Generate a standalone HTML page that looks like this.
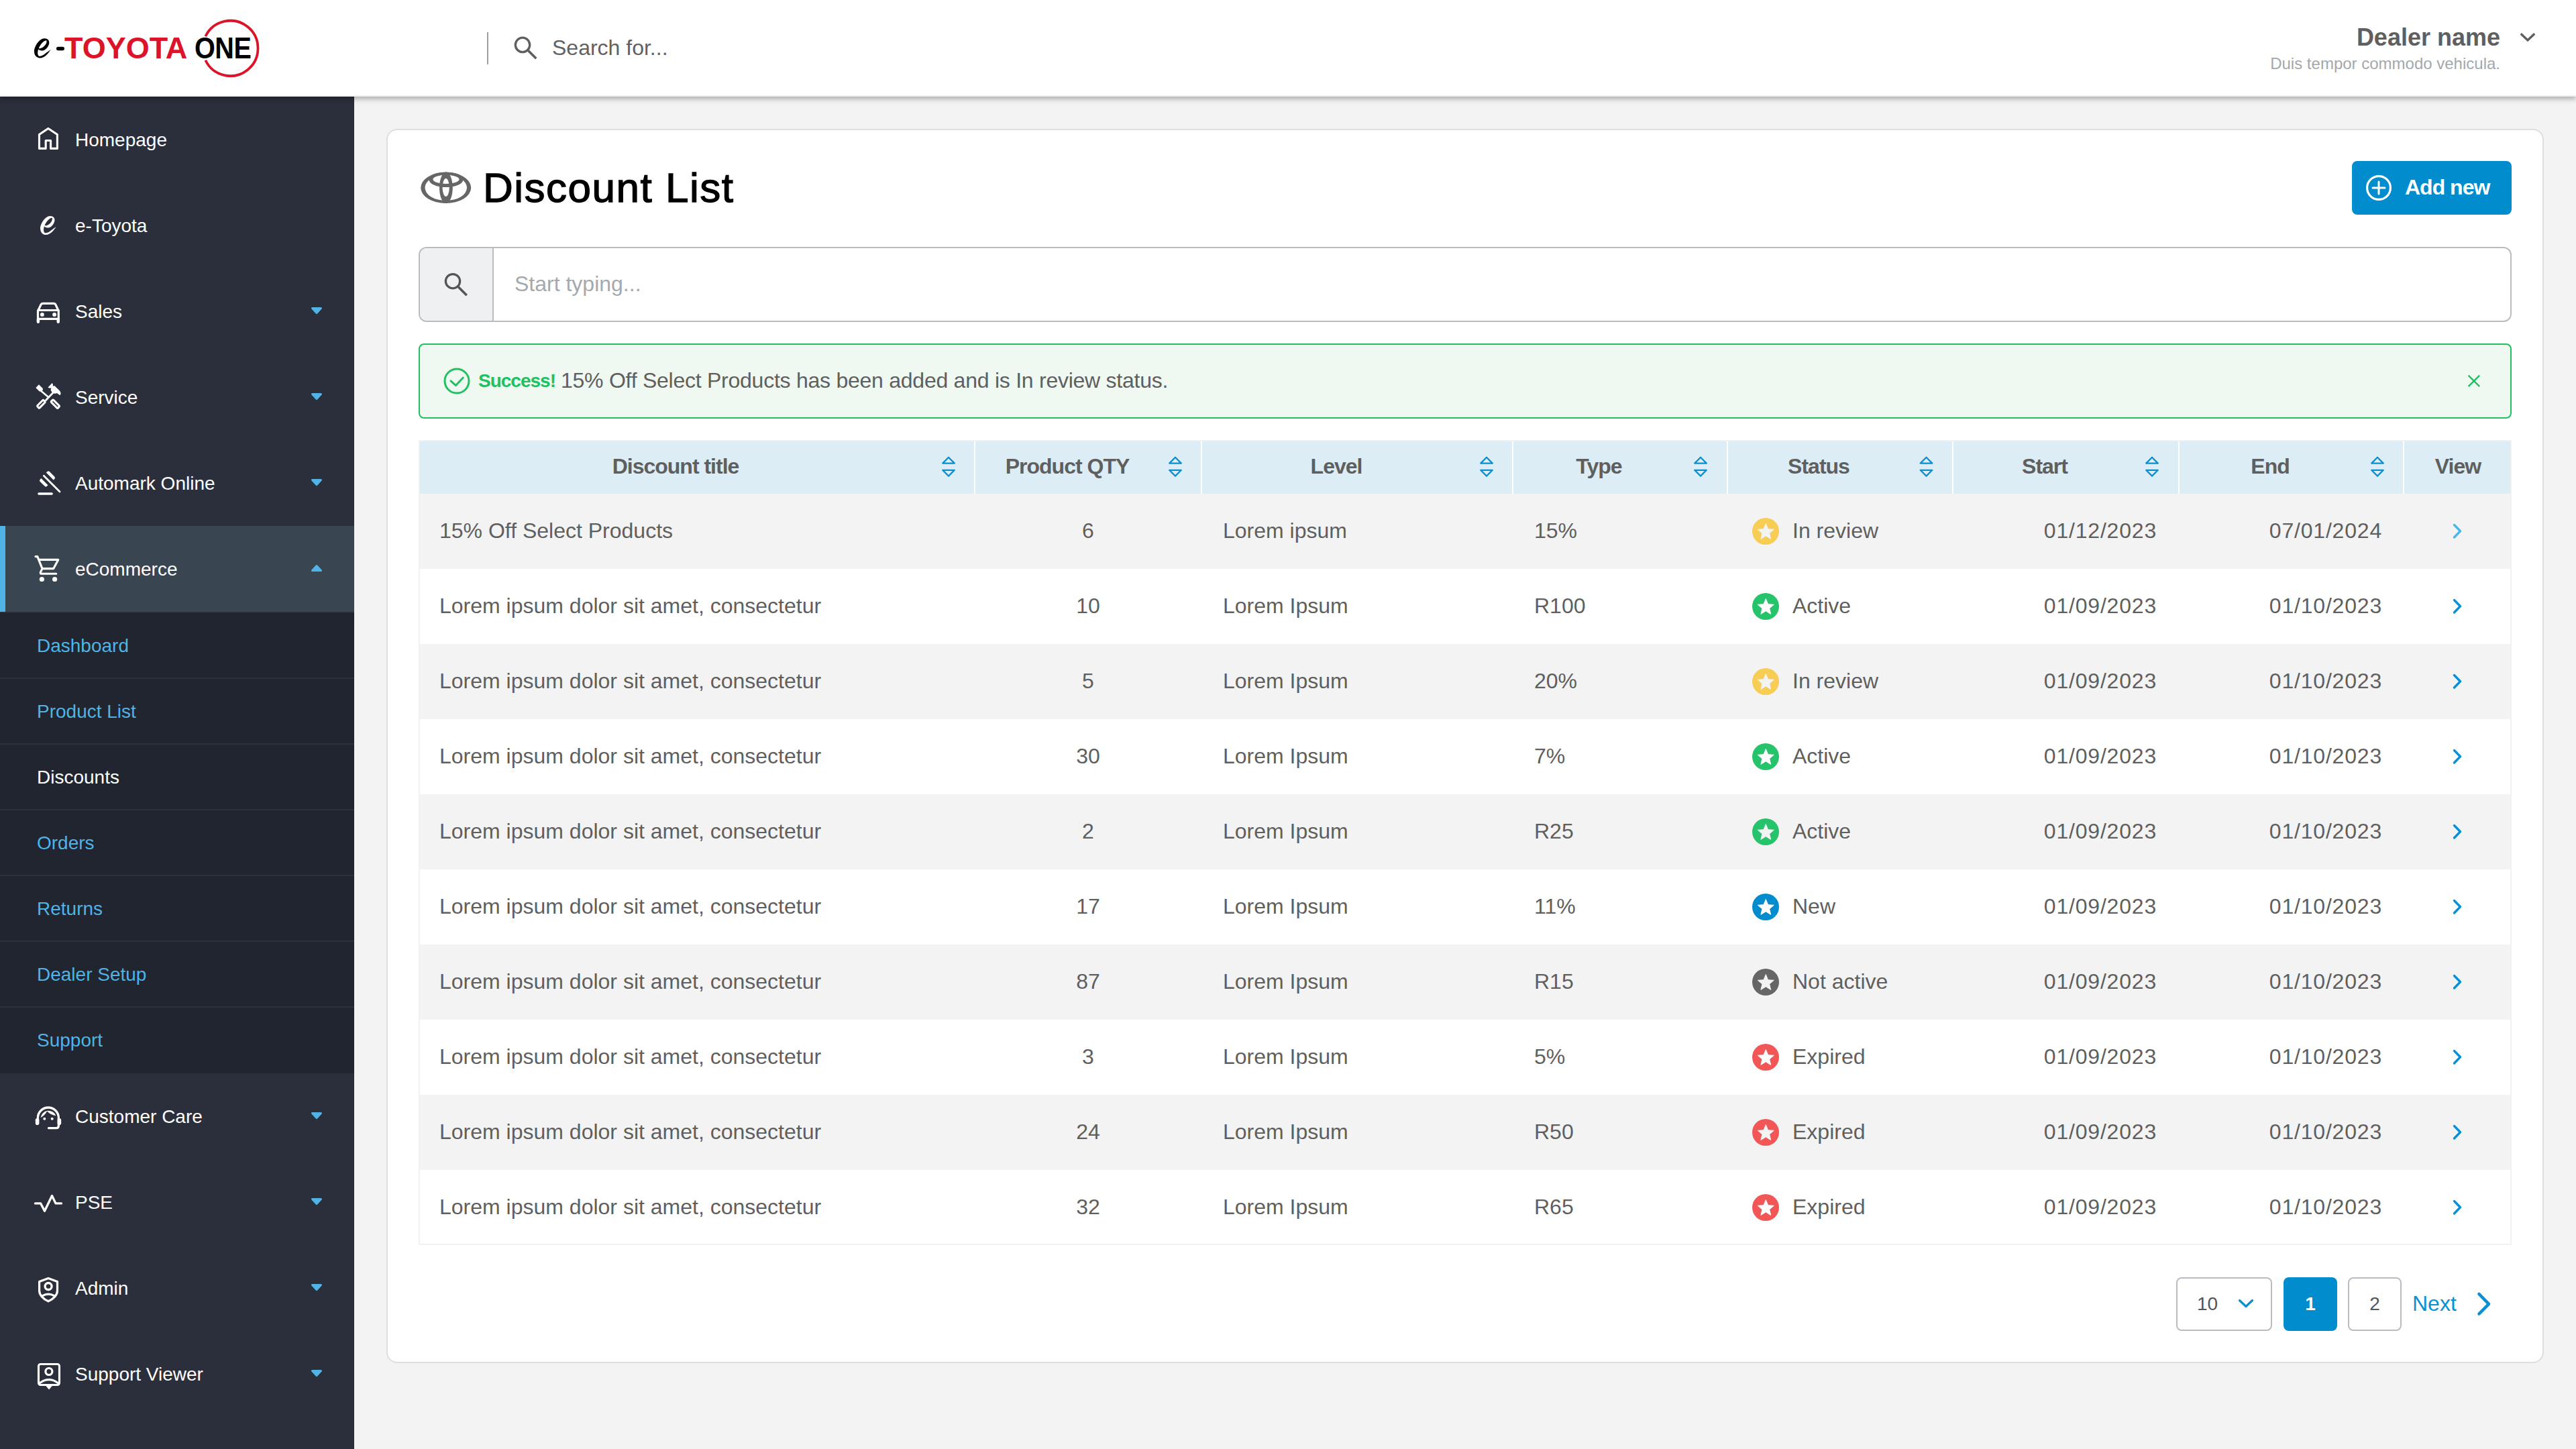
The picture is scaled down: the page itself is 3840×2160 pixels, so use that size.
<!DOCTYPE html>
<html><head><meta charset="utf-8">
<style>
*{box-sizing:border-box;margin:0;padding:0}
html,body{width:3840px;height:2160px;overflow:hidden;background:#f3f3f3;font-family:"Liberation Sans",sans-serif;color:#5f5f5f}
.abs{position:absolute}
#hdr{position:absolute;left:0;top:0;width:3840px;height:144px;background:#fff;z-index:5;border-bottom:2px solid #efefef;box-shadow:0 4px 7px rgba(0,0,0,.27)}
#side{position:absolute;left:0;top:144px;width:528px;height:2016px;background:#2b2f3b;z-index:3}
.it{position:absolute;left:0;width:528px;height:128px;display:flex;align-items:center;color:#fff;font-size:28px}
.it .tx{position:absolute;left:112px;top:49px;line-height:32px}
.it svg.ic{position:absolute;left:40px;top:34px;width:60px;height:60px}
.it .car{position:absolute;left:464px;top:56px;width:16px;height:16px}
.sub{position:absolute;left:0;width:528px;height:98px;display:flex;align-items:center;font-size:28px;color:#4fb3e6;border-bottom:2px solid #2d313b}
.sub .tx{position:absolute;left:55px;top:33px;line-height:32px}
#card{position:absolute;left:576px;top:192px;width:3216px;height:1840px;background:#fff;border:2px solid #dcdfe2;border-radius:16px}
.th{position:absolute;top:0;height:80px;display:flex;align-items:center;justify-content:center;font-weight:bold;font-size:32px;color:#5f5f5f}
.row{position:absolute;left:0;width:3116px;height:112px;font-size:32px;color:#5f5f5f}
.row.g{background:#f3f3f3}
.c{position:absolute;top:0;height:112px;display:flex;align-items:center;white-space:nowrap}
</style></head><body>
<!-- HEADER -->
<div id="hdr">
<svg class="abs" style="left:0;top:0" width="420" height="144" viewBox="0 0 420 144">
 <path d="M306.3 54.3 A41.1 41.1 0 1 1 306.3 89.7" fill="none" stroke="#dc1429" stroke-width="3.8"/>
 <path fill="#000" fill-rule="evenodd" d="M75.6 74 C72.3 79.3 66.5 86.4 59.9 86.6 C53.7 86.4 50.8 81.4 51 76 C51.2 69 58.6 57.4 66.1 57.2 C71.5 57.2 73.5 60.3 73.3 64 C72.9 69 68.2 75.2 63.2 75.6 C59.9 75.8 57.8 74.4 57.2 73.3 C55.9 77.3 55.7 81.4 57.8 83.4 C59.9 84.2 63.5 83.2 67 80.2 C70.5 77.5 73.5 75.5 75.6 74 Z M57.8 71.9 C59.9 66.9 64.8 60.7 68.6 60.3 C70.2 60.3 69.8 63.2 68.2 66.1 C65.7 69.8 61.5 73.1 57.8 71.9 Z"/>
 <rect x="84" y="69.8" width="12" height="5.4" rx="2.7" fill="#000"/>
</svg>
<div class="abs" id="toy" style="left:96px;top:49px;font-size:45px;font-weight:bold;color:#dc1429;line-height:45px;letter-spacing:0px">TOYOTA</div>
<div class="abs" id="one" style="left:290px;top:49px;font-size:45px;font-weight:bold;color:#000;line-height:45px;letter-spacing:-0.5px;transform:scaleX(.88);transform-origin:0 0">ONE</div>
<div class="abs" style="left:726px;top:48px;width:2px;height:48px;background:#a0a0a0"></div>
<svg class="abs" style="left:760px;top:48px" width="48" height="48" viewBox="760 48 48 48">
 <circle cx="779" cy="66.9" r="10.7" fill="none" stroke="#5f5f5f" stroke-width="3.3"/>
 <path d="M787 75 L798 86" stroke="#5f5f5f" stroke-width="3.6" stroke-linecap="square"/>
</svg>
<div class="abs" style="left:823px;top:55px;font-size:32px;line-height:32px;color:#616161">Search for...</div>
<div class="abs" style="right:113px;top:38px;font-size:36px;line-height:36px;font-weight:bold;color:#5f5f5f;text-align:right">Dealer name</div>
<svg class="abs" style="left:3750px;top:40px" width="36" height="30" viewBox="3750 40 36 30">
 <path d="M3759 51.5 L3768 60 L3777 51.5" fill="none" stroke="#5f5f5f" stroke-width="3.4" stroke-linecap="square"/>
</svg>
<div class="abs" style="right:113px;top:83px;font-size:24px;line-height:24px;color:#a3a8ac;text-align:right">Duis tempor commodo vehicula.</div>
</div>
<!-- SIDEBAR -->
<div id="side">
<div class="it" style="top:0px"><svg class="ic" style="top:36px" viewBox="0 0 60 60"><path d="M18.5 41.4 V20.5 L31.9 11.5 L45.4 20.5 V41.4 H35.6 V29.5 H28.2 V41.4 Z" stroke="#fff" fill="none" stroke-linecap="round" stroke-linejoin="round" stroke-width="3.1"/></svg><span class="tx">Homepage</span></div>
<div class="it" style="top:128px"><svg class="ic" style="top:34px" viewBox="0 0 60 60"><g transform="translate(19.9 15.7) scale(.96) translate(-50.8 -57)"><path fill="#fff" fill-rule="evenodd" d="M75.6 74 C72.3 79.3 66.5 86.4 59.9 86.6 C53.7 86.4 50.8 81.4 51 76 C51.2 69 58.6 57.4 66.1 57.2 C71.5 57.2 73.5 60.3 73.3 64 C72.9 69 68.2 75.2 63.2 75.6 C59.9 75.8 57.8 74.4 57.2 73.3 C55.9 77.3 55.7 81.4 57.8 83.4 C59.9 84.2 63.5 83.2 67 80.2 C70.5 77.5 73.5 75.5 75.6 74 Z M57.8 71.9 C59.9 66.9 64.8 60.7 68.6 60.3 C70.2 60.3 69.8 63.2 68.2 66.1 C65.7 69.8 61.5 73.1 57.8 71.9 Z"/></g></svg><span class="tx">e-Toyota</span></div>
<div class="it" style="top:256px"><svg class="ic" style="top:34px" viewBox="0 0 60 60"><path d="M16.5 44 V29.5 L21.2 19.8 Q22 18.4 24 18.4 H40 Q42 18.4 42.8 19.8 L47.3 29.5 V44 M16.5 28.5 H47.3 M16.5 41.3 H47.3" stroke="#fff" fill="none" stroke-linecap="round" stroke-linejoin="round" stroke-width="3.2"/><path d="M16.9 42 V45.8 M46.75 42 V45.8" stroke="#fff" fill="none" stroke-linecap="round" stroke-linejoin="round" stroke-width="4.4"/><circle cx="22.9" cy="34.9" r="2.9" fill="#fff"/><circle cx="41.1" cy="34.9" r="2.9" fill="#fff"/></svg><span class="tx">Sales</span><svg class="car" style="left:460px;top:54px;width:24px;height:18px" viewBox="0 0 24 18"><path d="M5.6 5.5 H18.4 L12 12.4 Z" fill="#4fb3e6" stroke="#4fb3e6" stroke-width="3.2" stroke-linejoin="round"/></svg></div>
<div class="it" style="top:384px"><svg class="ic" style="top:34px" viewBox="0 0 60 60"><path d="M13.3 15.9 L18 11.2 L23.8 17 V19.5 L21.3 21.5 H18.8 Z" fill="#fff"/><path d="M21.5 21 L31 29" stroke="#fff" fill="none" stroke-linecap="round" stroke-linejoin="round" stroke-width="2.8"/><rect x="-7" y="-2.3" width="14" height="4.6" rx="1" transform="translate(42.4 40.2) rotate(45)" stroke="#fff" fill="none" stroke-linecap="round" stroke-linejoin="round" stroke-width="3"/><rect x="-6.5" y="-2.3" width="13" height="4.6" rx="1" transform="translate(21.4 40.3) rotate(-45)" stroke="#fff" fill="none" stroke-linecap="round" stroke-linejoin="round" stroke-width="3"/><path d="M28.5 34.5 L38.5 24" stroke="#fff" fill="none" stroke-linecap="round" stroke-linejoin="round" stroke-width="2.8"/><path d="M31.5 15.5 L37.7 8.9 L38.9 10.8 V13.7 L41.2 13 L49.5 21.1 L50.7 24.4 L49.5 27.3 L44.7 24 L43 24.8 L40.2 24.4 L37.3 22.4 L35.6 19.5 L36.4 16.6 L33.1 16.6 Z" fill="#fff"/></svg><span class="tx">Service</span><svg class="car" style="left:460px;top:54px;width:24px;height:18px" viewBox="0 0 24 18"><path d="M5.6 5.5 H18.4 L12 12.4 Z" fill="#4fb3e6" stroke="#4fb3e6" stroke-width="3.2" stroke-linejoin="round"/></svg></div>
<div class="it" style="top:512px"><svg class="ic" style="top:34px" viewBox="0 0 60 60"><g transform="translate(24.9 18.8) rotate(45)"><path d="M-0.2 -5.8 H15.2 V-8 Q15.2 -10.4 12.8 -10.4 H2.2 Q-0.2 -10.4 -0.2 -8 Z M0.5 5.5 H14.9 V7.8 Q14.9 10.1 12.6 10.1 H2.8 Q0.5 10.1 0.5 7.8 Z" fill="#fff"/><path d="M0.6 0 H34.2" stroke="#fff" fill="none" stroke-linecap="round" stroke-linejoin="round" stroke-width="2.7"/></g><path d="M17.9 46 H37.2" stroke="#fff" fill="none" stroke-linecap="round" stroke-linejoin="round" stroke-width="3.4"/></svg><span class="tx">Automark Online</span><svg class="car" style="left:460px;top:54px;width:24px;height:18px" viewBox="0 0 24 18"><path d="M5.6 5.5 H18.4 L12 12.4 Z" fill="#4fb3e6" stroke="#4fb3e6" stroke-width="3.2" stroke-linejoin="round"/></svg></div>
<div class="it" style="top:640px;background:#3a4552"><div class="abs" style="left:0;top:0;width:8px;height:128px;background:#4fb3e6"></div><svg class="ic" style="top:34px" viewBox="0 0 60 60"><path d="M13 11.6 H15.8 L23 29.6 H39.8 L46.8 16.4 H18.4 M23 29.6 L20.4 35 Q19.6 37.3 22.2 37.3 H43.8" stroke="#fff" fill="none" stroke-linecap="round" stroke-linejoin="round" stroke-width="3.1"/><circle cx="22.4" cy="45.5" r="3.6" fill="#fff"/><circle cx="41.6" cy="45.5" r="3.6" fill="#fff"/></svg><span class="tx">eCommerce</span><svg class="car" style="left:460px;top:54px;width:24px;height:18px" viewBox="0 0 24 18"><path d="M5.6 12.5 H18.4 L12 5.6 Z" fill="#4fb3e6" stroke="#4fb3e6" stroke-width="3.2" stroke-linejoin="round"/></svg></div>
<div class="abs" style="left:0;top:768px;width:528px;height:688px;background:#21252f;border-top:2px solid #2b2f3a">
<div class="sub" style="top:0px;color:#4fb3e6;"><span class="tx">Dashboard</span></div>
<div class="sub" style="top:98px;color:#4fb3e6;"><span class="tx">Product List</span></div>
<div class="sub" style="top:196px;color:#fff;"><span class="tx">Discounts</span></div>
<div class="sub" style="top:294px;color:#4fb3e6;"><span class="tx">Orders</span></div>
<div class="sub" style="top:392px;color:#4fb3e6;"><span class="tx">Returns</span></div>
<div class="sub" style="top:490px;color:#4fb3e6;"><span class="tx">Dealer Setup</span></div>
<div class="sub" style="top:588px;color:#4fb3e6;border-bottom:none;"><span class="tx">Support</span></div>
</div>
<div class="it" style="top:1456px"><svg class="ic" style="top:34px" viewBox="0 0 60 60"><path d="M16.4 40 V32.5 A15.5 15.5 0 0 1 47.4 32.5 V44 Q47.4 47.6 44 47.6 H32.5" stroke="#fff" fill="none" stroke-linecap="round" stroke-linejoin="round" stroke-width="3.3"/><rect x="12.8" y="33" width="5.6" height="10" rx="2.8" fill="#fff"/><rect x="45.6" y="33" width="5.6" height="10" rx="2.8" fill="#fff"/><path d="M20.6 32 A11.8 11.8 0 0 1 43.3 29.2 C38 28.5 33 25.5 30.2 22.5 C27.5 27 24 30.5 20.6 32 Z" fill="#fff"/><circle cx="26.3" cy="33.7" r="2" fill="#fff"/><circle cx="37.7" cy="33.7" r="2" fill="#fff"/></svg><span class="tx">Customer Care</span><svg class="car" style="left:460px;top:54px;width:24px;height:18px" viewBox="0 0 24 18"><path d="M5.6 5.5 H18.4 L12 12.4 Z" fill="#4fb3e6" stroke="#4fb3e6" stroke-width="3.2" stroke-linejoin="round"/></svg></div>
<div class="it" style="top:1584px"><svg class="ic" style="top:34px" viewBox="0 0 60 60"><path d="M12.5 31.9 H20.7 L26.5 43.2 L37.5 20.5 L43 31.9 H51.5" stroke="#fff" fill="none" stroke-linecap="round" stroke-linejoin="round" stroke-width="3.3"/></svg><span class="tx">PSE</span><svg class="car" style="left:460px;top:54px;width:24px;height:18px" viewBox="0 0 24 18"><path d="M5.6 5.5 H18.4 L12 12.4 Z" fill="#4fb3e6" stroke="#4fb3e6" stroke-width="3.2" stroke-linejoin="round"/></svg></div>
<div class="it" style="top:1712px"><svg class="ic" style="top:34px" viewBox="0 0 60 60"><path d="M32 15.5 L18.6 20.6 V34 C18.6 40.5 24.5 46.5 32 49.8 C39.5 46.5 45.5 40.5 45.5 34 V20.6 Z" stroke="#fff" fill="none" stroke-linecap="round" stroke-linejoin="round" stroke-width="3.2"/><circle cx="32.1" cy="27.5" r="5" stroke="#fff" fill="none" stroke-linecap="round" stroke-linejoin="round" stroke-width="3.3"/><path d="M23.2 41.6 Q32 36.5 41 41.6" stroke="#fff" fill="none" stroke-linecap="round" stroke-linejoin="round" stroke-width="3.3"/></svg><span class="tx">Admin</span><svg class="car" style="left:460px;top:54px;width:24px;height:18px" viewBox="0 0 24 18"><path d="M5.6 5.5 H18.4 L12 12.4 Z" fill="#4fb3e6" stroke="#4fb3e6" stroke-width="3.2" stroke-linejoin="round"/></svg></div>
<div class="it" style="top:1840px"><svg class="ic" style="top:34px" viewBox="0 0 60 60"><rect x="17.5" y="15.5" width="31" height="31" rx="3" stroke="#fff" fill="none" stroke-linecap="round" stroke-linejoin="round" stroke-width="3.1"/><path d="M27.5 47 L33.1 53.4 L38.5 47 Z" fill="#fff"/><circle cx="32.9" cy="26.5" r="5" stroke="#fff" fill="none" stroke-linecap="round" stroke-linejoin="round" stroke-width="3.2"/><path d="M19.5 43.5 Q32.9 33.9 46.3 43.5" stroke="#fff" fill="none" stroke-linecap="round" stroke-linejoin="round" stroke-width="3.1"/></svg><span class="tx">Support Viewer</span><svg class="car" style="left:460px;top:54px;width:24px;height:18px" viewBox="0 0 24 18"><path d="M5.6 5.5 H18.4 L12 12.4 Z" fill="#4fb3e6" stroke="#4fb3e6" stroke-width="3.2" stroke-linejoin="round"/></svg></div>
</div>
<!-- CARD -->
<div id="card"></div>
<svg class="abs" style="left:620px;top:245px" width="90" height="70" viewBox="0 0 90 70"><g fill="#666" fill-rule="evenodd"><path d="M7.200000000000003 34.8 A37.5 23.2 0 1 0 82.2 34.8 A37.5 23.2 0 1 0 7.200000000000003 34.8 Z M13.5 34.8 A31.25 19.2 0 1 0 76.0 34.8 A31.25 19.2 0 1 0 13.5 34.8 Z"/><path d="M19.550000000000004 22.9 A25.4 11.2 0 1 0 70.35 22.9 A25.4 11.2 0 1 0 19.550000000000004 22.9 Z M25.35 22.35 A19.6 6.65 0 1 0 64.55000000000001 22.35 A19.6 6.65 0 1 0 25.35 22.35 Z"/><path d="M35.0 34.8 A9.9 23.2 0 1 0 54.8 34.8 A9.9 23.2 0 1 0 35.0 34.8 Z M39.6 34.4 A5.1 13.4 0 1 0 49.800000000000004 34.4 A5.1 13.4 0 1 0 39.6 34.4 Z"/></g></svg>
<div class="abs" style="left:720px;top:247.5px;font-size:62px;line-height:64px;color:#000;-webkit-text-stroke:1.3px #000;letter-spacing:1.5px">Discount List</div>
<div class="abs" style="left:3506px;top:240px;width:238px;height:80px;background:#008ccd;border-radius:8px"></div>
<svg class="abs" style="left:3520px;top:254px" width="52" height="52" viewBox="3520 254 52 52"><circle cx="3546" cy="280" r="17.4" fill="none" stroke="#fff" stroke-width="3.2"/><path d="M3537 280 H3555 M3546 271 V289" stroke="#fff" stroke-width="3" stroke-linecap="round"/></svg>
<div class="abs" style="left:3585px;top:263px;font-size:32px;line-height:32px;font-weight:bold;color:#fff;letter-spacing:-1px">Add new</div>
<div class="abs" style="left:624px;top:368px;width:3120px;height:112px;border:2px solid #b9bdc1;border-radius:12px;background:#fff;overflow:hidden"><div class="abs" style="left:0;top:0;width:110px;height:108px;background:#eff0f2;border-right:2px solid #b9bdc1"></div></div>
<svg class="abs" style="left:655px;top:400px" width="48" height="48" viewBox="655 400 48 48"><circle cx="675" cy="419.2" r="10.6" fill="none" stroke="#555" stroke-width="3.3"/><path d="M683 427.5 L694.5 439" stroke="#555" stroke-width="3.5" stroke-linecap="square"/></svg>
<div class="abs" style="left:767px;top:407px;font-size:32px;line-height:32px;color:#a4a9ad">Start typing...</div>
<div class="abs" style="left:624px;top:512px;width:3120px;height:112px;border:2px solid #21c063;border-radius:8px;background:#eff8f1"></div>
<svg class="abs" style="left:656px;top:543px" width="50" height="50" viewBox="656 543 50 50"><circle cx="681" cy="568" r="18" fill="none" stroke="#21c063" stroke-width="3"/><path d="M672 567.8 L679.5 574.6 L690.3 563" fill="none" stroke="#21c063" stroke-width="3" stroke-linecap="round" stroke-linejoin="round"/></svg>
<div class="abs" style="left:713px;top:554px;font-size:28px;line-height:28px;font-weight:bold;color:#21c063;letter-spacing:-1px">Success!</div>
<div class="abs" style="left:836px;top:551px;font-size:32px;line-height:32px;color:#5f5f5f;letter-spacing:-.25px;white-space:nowrap">15% Off Select Products has been added and is In review status.</div>
<svg class="abs" style="left:3670px;top:550px" width="36" height="36" viewBox="3670 550 36 36"><path d="M3679.6 559.6 L3696.2 576.2 M3696.2 559.6 L3679.6 576.2" stroke="#21c063" stroke-width="2.4" stroke-linecap="butt"/></svg>
<div class="abs" style="left:624px;top:656px;width:3120px;height:1200px;border:2px solid #f1f1f1;background:#fff"></div>
<div class="abs" style="left:626px;top:658px;width:3116px;height:78px;background:#dcedf6"></div>
<div class="abs" style="left:1452px;top:658px;width:2px;height:78px;background:#fff"></div>
<div class="abs" style="left:1790px;top:658px;width:2px;height:78px;background:#fff"></div>
<div class="abs" style="left:2254px;top:658px;width:2px;height:78px;background:#fff"></div>
<div class="abs" style="left:2574px;top:658px;width:2px;height:78px;background:#fff"></div>
<div class="abs" style="left:2910px;top:658px;width:2px;height:78px;background:#fff"></div>
<div class="abs" style="left:3247px;top:658px;width:2px;height:78px;background:#fff"></div>
<div class="abs" style="left:3582px;top:658px;width:2px;height:78px;background:#fff"></div>
<div class="abs" style="left:707px;top:679px;width:600px;text-align:center;font-size:32px;line-height:32px;font-weight:bold;color:#5f5f5f;letter-spacing:-1px">Discount title</div>
<div class="abs" style="left:1291px;top:679px;width:600px;text-align:center;font-size:32px;line-height:32px;font-weight:bold;color:#5f5f5f;letter-spacing:-1px">Product QTY</div>
<div class="abs" style="left:1692px;top:679px;width:600px;text-align:center;font-size:32px;line-height:32px;font-weight:bold;color:#5f5f5f;letter-spacing:-1px">Level</div>
<div class="abs" style="left:2083.5px;top:679px;width:600px;text-align:center;font-size:32px;line-height:32px;font-weight:bold;color:#5f5f5f;letter-spacing:-1px">Type</div>
<div class="abs" style="left:2411px;top:679px;width:600px;text-align:center;font-size:32px;line-height:32px;font-weight:bold;color:#5f5f5f;letter-spacing:-1px">Status</div>
<div class="abs" style="left:2748px;top:679px;width:600px;text-align:center;font-size:32px;line-height:32px;font-weight:bold;color:#5f5f5f;letter-spacing:-1px">Start</div>
<div class="abs" style="left:3084px;top:679px;width:600px;text-align:center;font-size:32px;line-height:32px;font-weight:bold;color:#5f5f5f;letter-spacing:-1px">End</div>
<div class="abs" style="left:3364px;top:679px;width:600px;text-align:center;font-size:32px;line-height:32px;font-weight:bold;color:#5f5f5f;letter-spacing:-1px">View</div>
<svg class="abs" style="left:0;top:0" width="3840" height="760"><g fill="none" stroke="#0a8fd0" stroke-width="2.3" stroke-linejoin="round"><path d="M1405.2 690.6 L1414 681.8 L1422.8 690.6 Z M1405.2 700.8 L1414 709.6 L1422.8 700.8 Z"/><path d="M1743.2 690.6 L1752 681.8 L1760.8 690.6 Z M1743.2 700.8 L1752 709.6 L1760.8 700.8 Z"/><path d="M2207.2 690.6 L2216 681.8 L2224.8 690.6 Z M2207.2 700.8 L2216 709.6 L2224.8 700.8 Z"/><path d="M2526.2 690.6 L2535 681.8 L2543.8 690.6 Z M2526.2 700.8 L2535 709.6 L2543.8 700.8 Z"/><path d="M2862.7 690.6 L2871.5 681.8 L2880.3 690.6 Z M2862.7 700.8 L2871.5 709.6 L2880.3 700.8 Z"/><path d="M3199.2 690.6 L3208 681.8 L3216.8 690.6 Z M3199.2 700.8 L3208 709.6 L3216.8 700.8 Z"/><path d="M3535.2 690.6 L3544 681.8 L3552.8 690.6 Z M3535.2 700.8 L3544 709.6 L3552.8 700.8 Z"/></g></svg>
<div class="abs" style="left:626px;top:736px;width:3116px;height:112px;background:#f3f3f3"><div class="abs" style="left:29px;top:39px;font-size:32px;line-height:32px;color:#5f5f5f;white-space:nowrap;">15% Off Select Products</div><div class="abs" style="left:896px;top:39px;width:200px;text-align:center;font-size:32px;line-height:32px;color:#5f5f5f">6</div><div class="abs" style="left:1197px;top:39px;font-size:32px;line-height:32px;color:#5f5f5f;white-space:nowrap;">Lorem ipsum</div><div class="abs" style="left:1661px;top:39px;font-size:32px;line-height:32px;color:#5f5f5f;white-space:nowrap;">15%</div><svg class="abs" style="left:1986px;top:36px" width="40" height="40" viewBox="0 0 40 40"><circle cx="20" cy="20" r="20" fill="#f7cd55"/><polygon points="20.30,8.60 23.59,16.67 32.28,17.31 25.63,22.93 27.71,31.39 20.30,26.80 12.89,31.39 14.97,22.93 8.32,17.31 17.01,16.67" fill="#f3f3f3" stroke="#f3f3f3" stroke-width="1" stroke-linejoin="round"/></svg><div class="abs" style="left:2046px;top:39px;font-size:32px;line-height:32px;color:#5f5f5f;white-space:nowrap;">In review</div><div class="abs" style="left:2189px;top:39px;width:400px;text-align:right;font-size:32px;line-height:32px;color:#5f5f5f;letter-spacing:.8px">01/12/2023</div><div class="abs" style="left:2525px;top:39px;width:400px;text-align:right;font-size:32px;line-height:32px;color:#5f5f5f;letter-spacing:.8px">07/01/2024</div><svg class="abs" style="left:3024px;top:40px" width="26" height="32" viewBox="0 0 26 32"><path d="M8.5 6.5 L17.5 15.8 L8.5 25" fill="none" stroke="#4db6e8" stroke-width="3.4" stroke-linecap="round" stroke-linejoin="round"/></svg></div>
<div class="abs" style="left:626px;top:848px;width:3116px;height:112px;background:#fff"><div class="abs" style="left:29px;top:39px;font-size:32px;line-height:32px;color:#5f5f5f;white-space:nowrap;">Lorem ipsum dolor sit amet, consectetur</div><div class="abs" style="left:896px;top:39px;width:200px;text-align:center;font-size:32px;line-height:32px;color:#5f5f5f">10</div><div class="abs" style="left:1197px;top:39px;font-size:32px;line-height:32px;color:#5f5f5f;white-space:nowrap;">Lorem Ipsum</div><div class="abs" style="left:1661px;top:39px;font-size:32px;line-height:32px;color:#5f5f5f;white-space:nowrap;">R100</div><svg class="abs" style="left:1986px;top:36px" width="40" height="40" viewBox="0 0 40 40"><circle cx="20" cy="20" r="20" fill="#27c36b"/><polygon points="20.30,8.60 23.59,16.67 32.28,17.31 25.63,22.93 27.71,31.39 20.30,26.80 12.89,31.39 14.97,22.93 8.32,17.31 17.01,16.67" fill="#fff" stroke="#fff" stroke-width="1" stroke-linejoin="round"/></svg><div class="abs" style="left:2046px;top:39px;font-size:32px;line-height:32px;color:#5f5f5f;white-space:nowrap;">Active</div><div class="abs" style="left:2189px;top:39px;width:400px;text-align:right;font-size:32px;line-height:32px;color:#5f5f5f;letter-spacing:.8px">01/09/2023</div><div class="abs" style="left:2525px;top:39px;width:400px;text-align:right;font-size:32px;line-height:32px;color:#5f5f5f;letter-spacing:.8px">01/10/2023</div><svg class="abs" style="left:3024px;top:40px" width="26" height="32" viewBox="0 0 26 32"><path d="M8.5 6.5 L17.5 15.8 L8.5 25" fill="none" stroke="#0a8fd0" stroke-width="3.4" stroke-linecap="round" stroke-linejoin="round"/></svg></div>
<div class="abs" style="left:626px;top:960px;width:3116px;height:112px;background:#f3f3f3"><div class="abs" style="left:29px;top:39px;font-size:32px;line-height:32px;color:#5f5f5f;white-space:nowrap;">Lorem ipsum dolor sit amet, consectetur</div><div class="abs" style="left:896px;top:39px;width:200px;text-align:center;font-size:32px;line-height:32px;color:#5f5f5f">5</div><div class="abs" style="left:1197px;top:39px;font-size:32px;line-height:32px;color:#5f5f5f;white-space:nowrap;">Lorem Ipsum</div><div class="abs" style="left:1661px;top:39px;font-size:32px;line-height:32px;color:#5f5f5f;white-space:nowrap;">20%</div><svg class="abs" style="left:1986px;top:36px" width="40" height="40" viewBox="0 0 40 40"><circle cx="20" cy="20" r="20" fill="#f7cd55"/><polygon points="20.30,8.60 23.59,16.67 32.28,17.31 25.63,22.93 27.71,31.39 20.30,26.80 12.89,31.39 14.97,22.93 8.32,17.31 17.01,16.67" fill="#f3f3f3" stroke="#f3f3f3" stroke-width="1" stroke-linejoin="round"/></svg><div class="abs" style="left:2046px;top:39px;font-size:32px;line-height:32px;color:#5f5f5f;white-space:nowrap;">In review</div><div class="abs" style="left:2189px;top:39px;width:400px;text-align:right;font-size:32px;line-height:32px;color:#5f5f5f;letter-spacing:.8px">01/09/2023</div><div class="abs" style="left:2525px;top:39px;width:400px;text-align:right;font-size:32px;line-height:32px;color:#5f5f5f;letter-spacing:.8px">01/10/2023</div><svg class="abs" style="left:3024px;top:40px" width="26" height="32" viewBox="0 0 26 32"><path d="M8.5 6.5 L17.5 15.8 L8.5 25" fill="none" stroke="#0a8fd0" stroke-width="3.4" stroke-linecap="round" stroke-linejoin="round"/></svg></div>
<div class="abs" style="left:626px;top:1072px;width:3116px;height:112px;background:#fff"><div class="abs" style="left:29px;top:39px;font-size:32px;line-height:32px;color:#5f5f5f;white-space:nowrap;">Lorem ipsum dolor sit amet, consectetur</div><div class="abs" style="left:896px;top:39px;width:200px;text-align:center;font-size:32px;line-height:32px;color:#5f5f5f">30</div><div class="abs" style="left:1197px;top:39px;font-size:32px;line-height:32px;color:#5f5f5f;white-space:nowrap;">Lorem Ipsum</div><div class="abs" style="left:1661px;top:39px;font-size:32px;line-height:32px;color:#5f5f5f;white-space:nowrap;">7%</div><svg class="abs" style="left:1986px;top:36px" width="40" height="40" viewBox="0 0 40 40"><circle cx="20" cy="20" r="20" fill="#27c36b"/><polygon points="20.30,8.60 23.59,16.67 32.28,17.31 25.63,22.93 27.71,31.39 20.30,26.80 12.89,31.39 14.97,22.93 8.32,17.31 17.01,16.67" fill="#fff" stroke="#fff" stroke-width="1" stroke-linejoin="round"/></svg><div class="abs" style="left:2046px;top:39px;font-size:32px;line-height:32px;color:#5f5f5f;white-space:nowrap;">Active</div><div class="abs" style="left:2189px;top:39px;width:400px;text-align:right;font-size:32px;line-height:32px;color:#5f5f5f;letter-spacing:.8px">01/09/2023</div><div class="abs" style="left:2525px;top:39px;width:400px;text-align:right;font-size:32px;line-height:32px;color:#5f5f5f;letter-spacing:.8px">01/10/2023</div><svg class="abs" style="left:3024px;top:40px" width="26" height="32" viewBox="0 0 26 32"><path d="M8.5 6.5 L17.5 15.8 L8.5 25" fill="none" stroke="#0a8fd0" stroke-width="3.4" stroke-linecap="round" stroke-linejoin="round"/></svg></div>
<div class="abs" style="left:626px;top:1184px;width:3116px;height:112px;background:#f3f3f3"><div class="abs" style="left:29px;top:39px;font-size:32px;line-height:32px;color:#5f5f5f;white-space:nowrap;">Lorem ipsum dolor sit amet, consectetur</div><div class="abs" style="left:896px;top:39px;width:200px;text-align:center;font-size:32px;line-height:32px;color:#5f5f5f">2</div><div class="abs" style="left:1197px;top:39px;font-size:32px;line-height:32px;color:#5f5f5f;white-space:nowrap;">Lorem Ipsum</div><div class="abs" style="left:1661px;top:39px;font-size:32px;line-height:32px;color:#5f5f5f;white-space:nowrap;">R25</div><svg class="abs" style="left:1986px;top:36px" width="40" height="40" viewBox="0 0 40 40"><circle cx="20" cy="20" r="20" fill="#27c36b"/><polygon points="20.30,8.60 23.59,16.67 32.28,17.31 25.63,22.93 27.71,31.39 20.30,26.80 12.89,31.39 14.97,22.93 8.32,17.31 17.01,16.67" fill="#f3f3f3" stroke="#f3f3f3" stroke-width="1" stroke-linejoin="round"/></svg><div class="abs" style="left:2046px;top:39px;font-size:32px;line-height:32px;color:#5f5f5f;white-space:nowrap;">Active</div><div class="abs" style="left:2189px;top:39px;width:400px;text-align:right;font-size:32px;line-height:32px;color:#5f5f5f;letter-spacing:.8px">01/09/2023</div><div class="abs" style="left:2525px;top:39px;width:400px;text-align:right;font-size:32px;line-height:32px;color:#5f5f5f;letter-spacing:.8px">01/10/2023</div><svg class="abs" style="left:3024px;top:40px" width="26" height="32" viewBox="0 0 26 32"><path d="M8.5 6.5 L17.5 15.8 L8.5 25" fill="none" stroke="#0a8fd0" stroke-width="3.4" stroke-linecap="round" stroke-linejoin="round"/></svg></div>
<div class="abs" style="left:626px;top:1296px;width:3116px;height:112px;background:#fff"><div class="abs" style="left:29px;top:39px;font-size:32px;line-height:32px;color:#5f5f5f;white-space:nowrap;">Lorem ipsum dolor sit amet, consectetur</div><div class="abs" style="left:896px;top:39px;width:200px;text-align:center;font-size:32px;line-height:32px;color:#5f5f5f">17</div><div class="abs" style="left:1197px;top:39px;font-size:32px;line-height:32px;color:#5f5f5f;white-space:nowrap;">Lorem Ipsum</div><div class="abs" style="left:1661px;top:39px;font-size:32px;line-height:32px;color:#5f5f5f;white-space:nowrap;">11%</div><svg class="abs" style="left:1986px;top:36px" width="40" height="40" viewBox="0 0 40 40"><circle cx="20" cy="20" r="20" fill="#008ccd"/><polygon points="20.30,8.60 23.59,16.67 32.28,17.31 25.63,22.93 27.71,31.39 20.30,26.80 12.89,31.39 14.97,22.93 8.32,17.31 17.01,16.67" fill="#fff" stroke="#fff" stroke-width="1" stroke-linejoin="round"/></svg><div class="abs" style="left:2046px;top:39px;font-size:32px;line-height:32px;color:#5f5f5f;white-space:nowrap;">New</div><div class="abs" style="left:2189px;top:39px;width:400px;text-align:right;font-size:32px;line-height:32px;color:#5f5f5f;letter-spacing:.8px">01/09/2023</div><div class="abs" style="left:2525px;top:39px;width:400px;text-align:right;font-size:32px;line-height:32px;color:#5f5f5f;letter-spacing:.8px">01/10/2023</div><svg class="abs" style="left:3024px;top:40px" width="26" height="32" viewBox="0 0 26 32"><path d="M8.5 6.5 L17.5 15.8 L8.5 25" fill="none" stroke="#0a8fd0" stroke-width="3.4" stroke-linecap="round" stroke-linejoin="round"/></svg></div>
<div class="abs" style="left:626px;top:1408px;width:3116px;height:112px;background:#f3f3f3"><div class="abs" style="left:29px;top:39px;font-size:32px;line-height:32px;color:#5f5f5f;white-space:nowrap;">Lorem ipsum dolor sit amet, consectetur</div><div class="abs" style="left:896px;top:39px;width:200px;text-align:center;font-size:32px;line-height:32px;color:#5f5f5f">87</div><div class="abs" style="left:1197px;top:39px;font-size:32px;line-height:32px;color:#5f5f5f;white-space:nowrap;">Lorem Ipsum</div><div class="abs" style="left:1661px;top:39px;font-size:32px;line-height:32px;color:#5f5f5f;white-space:nowrap;">R15</div><svg class="abs" style="left:1986px;top:36px" width="40" height="40" viewBox="0 0 40 40"><circle cx="20" cy="20" r="20" fill="#666666"/><polygon points="20.30,8.60 23.59,16.67 32.28,17.31 25.63,22.93 27.71,31.39 20.30,26.80 12.89,31.39 14.97,22.93 8.32,17.31 17.01,16.67" fill="#f3f3f3" stroke="#f3f3f3" stroke-width="1" stroke-linejoin="round"/></svg><div class="abs" style="left:2046px;top:39px;font-size:32px;line-height:32px;color:#5f5f5f;white-space:nowrap;">Not active</div><div class="abs" style="left:2189px;top:39px;width:400px;text-align:right;font-size:32px;line-height:32px;color:#5f5f5f;letter-spacing:.8px">01/09/2023</div><div class="abs" style="left:2525px;top:39px;width:400px;text-align:right;font-size:32px;line-height:32px;color:#5f5f5f;letter-spacing:.8px">01/10/2023</div><svg class="abs" style="left:3024px;top:40px" width="26" height="32" viewBox="0 0 26 32"><path d="M8.5 6.5 L17.5 15.8 L8.5 25" fill="none" stroke="#0a8fd0" stroke-width="3.4" stroke-linecap="round" stroke-linejoin="round"/></svg></div>
<div class="abs" style="left:626px;top:1520px;width:3116px;height:112px;background:#fff"><div class="abs" style="left:29px;top:39px;font-size:32px;line-height:32px;color:#5f5f5f;white-space:nowrap;">Lorem ipsum dolor sit amet, consectetur</div><div class="abs" style="left:896px;top:39px;width:200px;text-align:center;font-size:32px;line-height:32px;color:#5f5f5f">3</div><div class="abs" style="left:1197px;top:39px;font-size:32px;line-height:32px;color:#5f5f5f;white-space:nowrap;">Lorem Ipsum</div><div class="abs" style="left:1661px;top:39px;font-size:32px;line-height:32px;color:#5f5f5f;white-space:nowrap;">5%</div><svg class="abs" style="left:1986px;top:36px" width="40" height="40" viewBox="0 0 40 40"><circle cx="20" cy="20" r="20" fill="#f25757"/><polygon points="20.30,8.60 23.59,16.67 32.28,17.31 25.63,22.93 27.71,31.39 20.30,26.80 12.89,31.39 14.97,22.93 8.32,17.31 17.01,16.67" fill="#fff" stroke="#fff" stroke-width="1" stroke-linejoin="round"/></svg><div class="abs" style="left:2046px;top:39px;font-size:32px;line-height:32px;color:#5f5f5f;white-space:nowrap;">Expired</div><div class="abs" style="left:2189px;top:39px;width:400px;text-align:right;font-size:32px;line-height:32px;color:#5f5f5f;letter-spacing:.8px">01/09/2023</div><div class="abs" style="left:2525px;top:39px;width:400px;text-align:right;font-size:32px;line-height:32px;color:#5f5f5f;letter-spacing:.8px">01/10/2023</div><svg class="abs" style="left:3024px;top:40px" width="26" height="32" viewBox="0 0 26 32"><path d="M8.5 6.5 L17.5 15.8 L8.5 25" fill="none" stroke="#0a8fd0" stroke-width="3.4" stroke-linecap="round" stroke-linejoin="round"/></svg></div>
<div class="abs" style="left:626px;top:1632px;width:3116px;height:112px;background:#f3f3f3"><div class="abs" style="left:29px;top:39px;font-size:32px;line-height:32px;color:#5f5f5f;white-space:nowrap;">Lorem ipsum dolor sit amet, consectetur</div><div class="abs" style="left:896px;top:39px;width:200px;text-align:center;font-size:32px;line-height:32px;color:#5f5f5f">24</div><div class="abs" style="left:1197px;top:39px;font-size:32px;line-height:32px;color:#5f5f5f;white-space:nowrap;">Lorem Ipsum</div><div class="abs" style="left:1661px;top:39px;font-size:32px;line-height:32px;color:#5f5f5f;white-space:nowrap;">R50</div><svg class="abs" style="left:1986px;top:36px" width="40" height="40" viewBox="0 0 40 40"><circle cx="20" cy="20" r="20" fill="#f25757"/><polygon points="20.30,8.60 23.59,16.67 32.28,17.31 25.63,22.93 27.71,31.39 20.30,26.80 12.89,31.39 14.97,22.93 8.32,17.31 17.01,16.67" fill="#f3f3f3" stroke="#f3f3f3" stroke-width="1" stroke-linejoin="round"/></svg><div class="abs" style="left:2046px;top:39px;font-size:32px;line-height:32px;color:#5f5f5f;white-space:nowrap;">Expired</div><div class="abs" style="left:2189px;top:39px;width:400px;text-align:right;font-size:32px;line-height:32px;color:#5f5f5f;letter-spacing:.8px">01/09/2023</div><div class="abs" style="left:2525px;top:39px;width:400px;text-align:right;font-size:32px;line-height:32px;color:#5f5f5f;letter-spacing:.8px">01/10/2023</div><svg class="abs" style="left:3024px;top:40px" width="26" height="32" viewBox="0 0 26 32"><path d="M8.5 6.5 L17.5 15.8 L8.5 25" fill="none" stroke="#0a8fd0" stroke-width="3.4" stroke-linecap="round" stroke-linejoin="round"/></svg></div>
<div class="abs" style="left:626px;top:1744px;width:3116px;height:112px;background:#fff"><div class="abs" style="left:29px;top:39px;font-size:32px;line-height:32px;color:#5f5f5f;white-space:nowrap;">Lorem ipsum dolor sit amet, consectetur</div><div class="abs" style="left:896px;top:39px;width:200px;text-align:center;font-size:32px;line-height:32px;color:#5f5f5f">32</div><div class="abs" style="left:1197px;top:39px;font-size:32px;line-height:32px;color:#5f5f5f;white-space:nowrap;">Lorem Ipsum</div><div class="abs" style="left:1661px;top:39px;font-size:32px;line-height:32px;color:#5f5f5f;white-space:nowrap;">R65</div><svg class="abs" style="left:1986px;top:36px" width="40" height="40" viewBox="0 0 40 40"><circle cx="20" cy="20" r="20" fill="#f25757"/><polygon points="20.30,8.60 23.59,16.67 32.28,17.31 25.63,22.93 27.71,31.39 20.30,26.80 12.89,31.39 14.97,22.93 8.32,17.31 17.01,16.67" fill="#fff" stroke="#fff" stroke-width="1" stroke-linejoin="round"/></svg><div class="abs" style="left:2046px;top:39px;font-size:32px;line-height:32px;color:#5f5f5f;white-space:nowrap;">Expired</div><div class="abs" style="left:2189px;top:39px;width:400px;text-align:right;font-size:32px;line-height:32px;color:#5f5f5f;letter-spacing:.8px">01/09/2023</div><div class="abs" style="left:2525px;top:39px;width:400px;text-align:right;font-size:32px;line-height:32px;color:#5f5f5f;letter-spacing:.8px">01/10/2023</div><svg class="abs" style="left:3024px;top:40px" width="26" height="32" viewBox="0 0 26 32"><path d="M8.5 6.5 L17.5 15.8 L8.5 25" fill="none" stroke="#0a8fd0" stroke-width="3.4" stroke-linecap="round" stroke-linejoin="round"/></svg></div>
<div class="abs" style="left:624px;top:656px;width:3120px;height:1200px;border:2px solid #f1f1f1;pointer-events:none"></div>
<div class="abs" style="left:3244px;top:1904px;width:143px;height:80px;border:2px solid #b9bdc1;border-radius:8px;background:#fff"></div>
<div class="abs" style="left:3275px;top:1930px;font-size:28px;line-height:28px;color:#555">10</div>
<svg class="abs" style="left:3330px;top:1930px" width="36" height="26" viewBox="3330 1930 36 26"><path d="M3338.5 1938.5 L3348 1947.5 L3357.5 1938.5" fill="none" stroke="#0a8fd0" stroke-width="3.2" stroke-linecap="round" stroke-linejoin="round"/></svg>
<div class="abs" style="left:3404px;top:1904px;width:80px;height:80px;background:#008ccd;border-radius:8px;color:#fff;font-weight:bold;font-size:28px;line-height:80px;text-align:center">1</div>
<div class="abs" style="left:3500px;top:1904px;width:80px;height:80px;border:2px solid #b9bdc1;border-radius:8px;background:#fff;color:#555;font-size:28px;line-height:76px;text-align:center">2</div>
<div class="abs" style="left:3596px;top:1927px;font-size:32px;line-height:32px;color:#0a8fd0">Next</div>
<svg class="abs" style="left:3680px;top:1915px" width="44" height="56" viewBox="3680 1915 44 56"><path d="M3695.5 1929 L3710 1943.8 L3695.5 1958.5" fill="none" stroke="#0a8fd0" stroke-width="4.6" stroke-linecap="round" stroke-linejoin="round"/></svg>

</body></html>
